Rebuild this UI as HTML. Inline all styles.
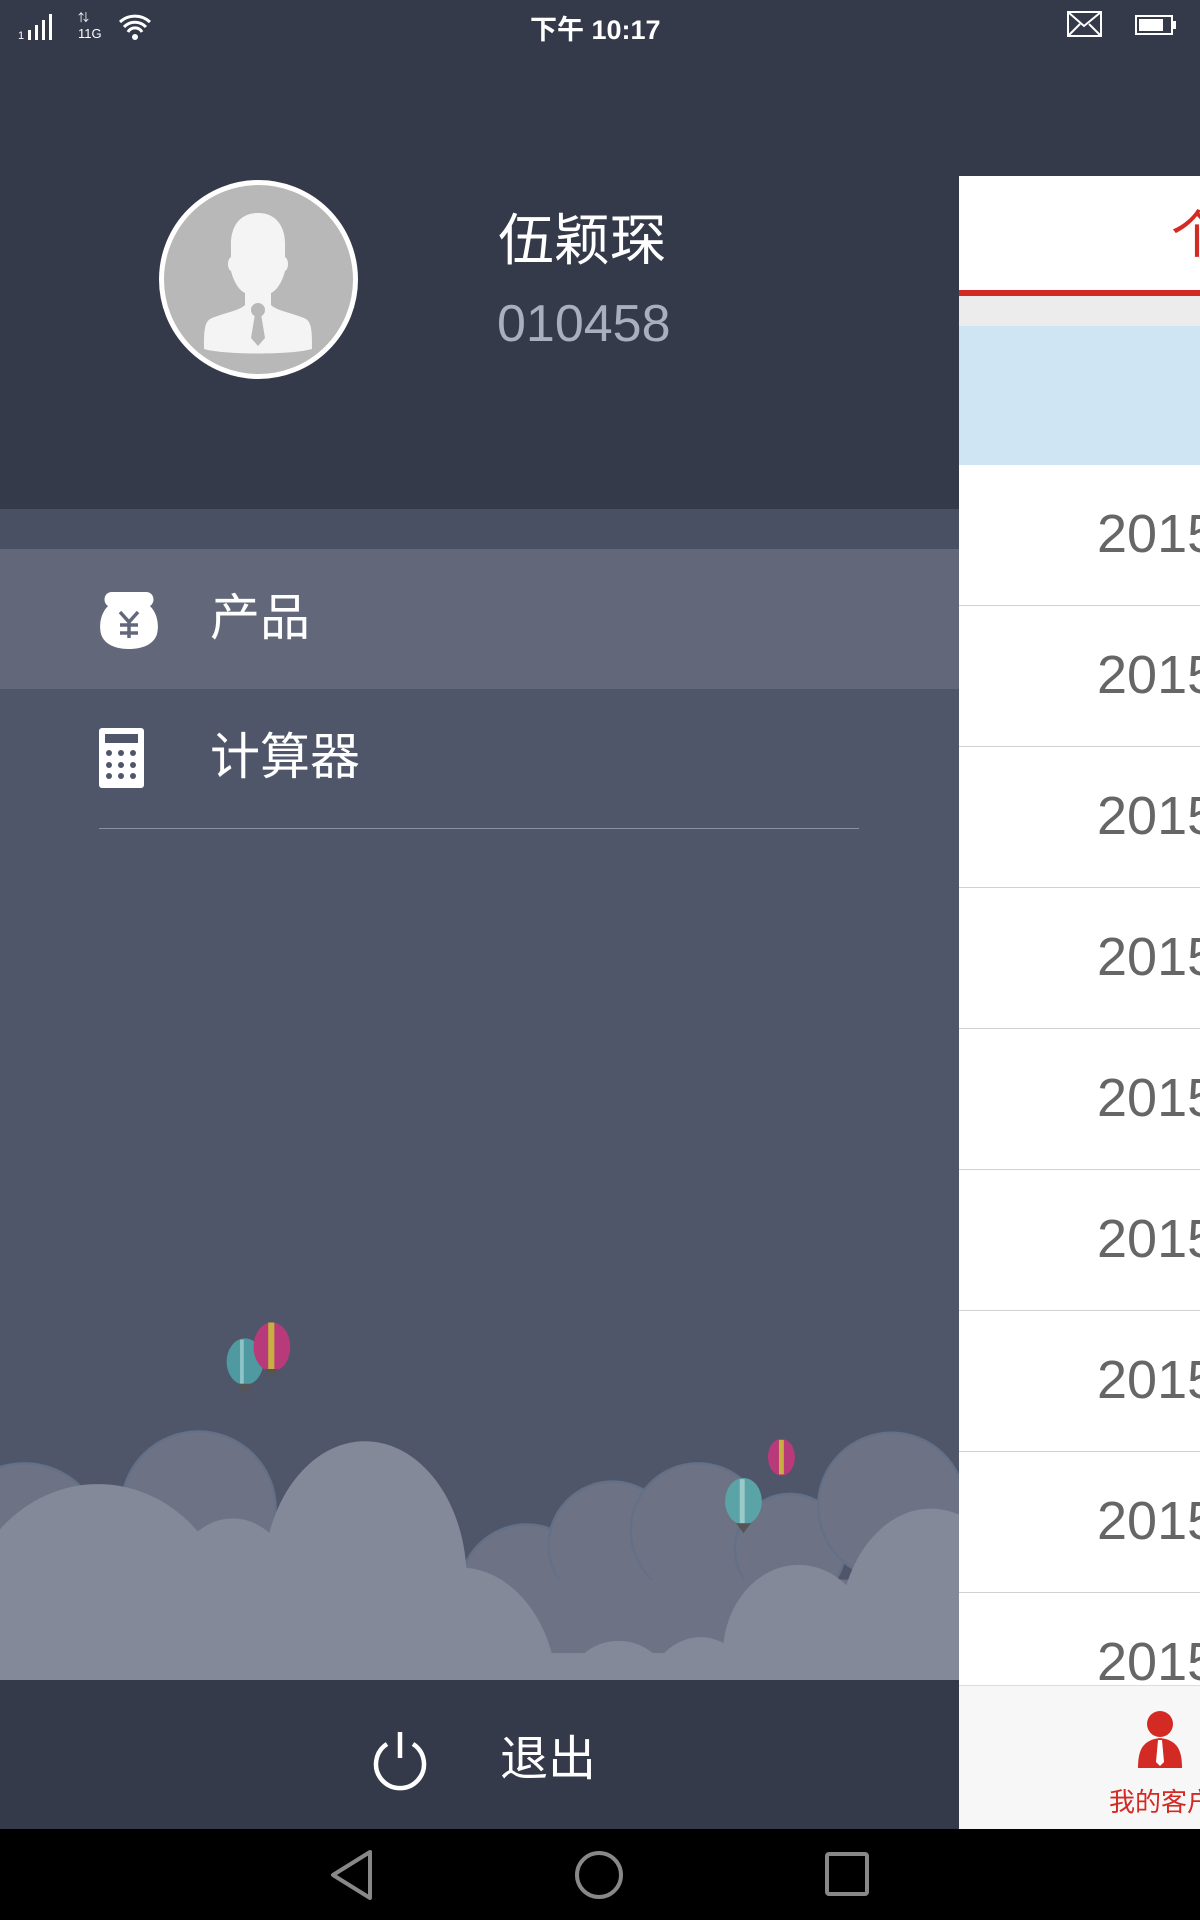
<!DOCTYPE html>
<html><head><meta charset="utf-8"><style>
*{margin:0;padding:0;box-sizing:border-box}
body{width:1200px;height:1920px;position:relative;overflow:hidden;background:#353a4a;font-family:"Liberation Sans","Noto Sans CJK SC",sans-serif}
.a{position:absolute}
.r{height:141px;border-bottom:1px solid #d0d0d0;color:#666;font-size:54px;padding:38px 0 0 138px;overflow:hidden;white-space:nowrap}
</style></head><body>
<!-- status bar -->
<svg class="a" style="left:16px;top:8px" width="140" height="36">
<text x="2" y="31" font-size="11" fill="#fff" font-family="Liberation Sans">1</text>
<rect x="12" y="22" width="3" height="10" fill="#fff"/><rect x="19" y="17" width="3" height="15" fill="#fff"/><rect x="26" y="12" width="3" height="20" fill="#fff"/><rect x="33" y="6" width="3" height="26" fill="#fff"/>
<text x="62" y="13" font-size="11" fill="#fff">⇅</text><text x="62" y="30" font-size="13" fill="#fff">11G</text>
<path d="M104 14a22 22 0 0 1 30 0M108 19a15 15 0 0 1 22 0M112 24a8 8 0 0 1 14 0" stroke="#fff" stroke-width="3" fill="none"/><circle cx="119" cy="29" r="3" fill="#fff"/>
</svg>
<div class="a" style="left:530px;top:8px;color:#fff;font-size:27px;font-weight:bold">下午&nbsp;10:17</div>
<svg class="a" style="left:1066px;top:10px" width="120" height="30">
<rect x="2" y="2" width="33" height="24" fill="none" stroke="#fff" stroke-width="2"/><path d="M2 2l16 14 17-14M2 26l12-12M35 26l-12-12" stroke="#fff" stroke-width="2" fill="none"/>
<rect x="70" y="6" width="36" height="18" fill="none" stroke="#fff" stroke-width="2"/><rect x="73" y="9" width="24" height="12" fill="#fff"/><rect x="106" y="11" width="4" height="8" fill="#fff"/>
</svg>
<!-- header avatar -->
<div class="a" style="left:159px;top:180px;width:199px;height:199px;border-radius:50%;background:#b8b8b8;border:5px solid #fff"></div>
<svg class="a" style="left:159px;top:180px" width="199" height="199">
<path d="M99 33c-20 0-28 16-27 34l0 10c-4 2-4 12 0 14 3 12 9 20 14 22l0 12c-6 6-22 8-35 14-6 4-6 14-6 30 20 6 88 6 108 0 0-16 0-26-6-30-13-6-29-8-35-14l0-12c5-2 11-10 14-22 4-2 4-12 0-14l0-10c1-18-7-34-27-34z" fill="#f4f4f4"/>
<path d="M95 128h8l-1 6 4 24-7 8-7-8 4-24z" fill="#b8b8b8"/><circle cx="99" cy="130" r="7" fill="#b8b8b8"/>
</svg>
<div class="a" style="left:498px;top:206px;color:#fff;font-size:56px;line-height:70px">伍颖琛</div>
<div class="a" style="left:497px;top:294px;color:#a9afbe;font-size:52px;line-height:60px">010458</div>
<!-- menu -->
<div class="a" style="left:0;top:509px;width:959px;height:1171px;background:#50566a"></div>
<div class="a" style="left:0;top:509px;width:959px;height:40px;background:#4a5064"></div>
<div class="a" style="left:0;top:549px;width:959px;height:140px;background:#626879"></div>
<svg class="a" style="left:98px;top:588px" width="62" height="62">
<path d="M14 4c-8 0-10 10-4 14C2 26 1 38 3 46c3 10 14 15 28 15s25-5 28-15c2-8 1-20-7-28 6-4 4-14-4-14z" fill="#fff"/>
<path d="M22 24l9 10 9-10M22 37h18M22 45h18M31 34v16" stroke="#626879" stroke-width="3.5" fill="none"/>
</svg>
<div class="a" style="left:210px;top:588px;color:#fff;font-size:50px;line-height:60px">产品</div>
<svg class="a" style="left:99px;top:728px" width="46" height="60">
<rect width="45" height="60" rx="3" fill="#fff"/><rect x="6" y="6" width="33" height="9" fill="#50566a"/>
<g fill="#50566a"><circle cx="10" cy="25" r="3"/><circle cx="22" cy="25" r="3"/><circle cx="34" cy="25" r="3"/><circle cx="10" cy="37" r="3"/><circle cx="22" cy="37" r="3"/><circle cx="34" cy="37" r="3"/><circle cx="10" cy="48" r="3"/><circle cx="22" cy="48" r="3"/><circle cx="34" cy="48" r="3"/></g>
</svg>
<div class="a" style="left:210px;top:727px;color:#fff;font-size:50px;line-height:60px">计算器</div>
<div class="a" style="left:99px;top:828px;width:760px;height:1px;background:#8a90a0"></div>
<!-- clouds -->
<svg class="a" style="left:0;top:1298px" width="959" height="382" viewBox="0 1060 783 312" preserveAspectRatio="none">
<g fill="#6d7385" stroke="#637087" stroke-width="2">
<circle cx="20" cy="1260" r="65"/><circle cx="162" cy="1232" r="63"/>
<circle cx="430" cy="1300" r="55"/><circle cx="500" cy="1262" r="52"/><circle cx="570" cy="1250" r="55"/><circle cx="645" cy="1265" r="45"/><circle cx="728" cy="1230" r="60"/>
<rect x="0" y="1290" width="783" height="82" stroke="none"/>
</g>
<g fill="#838998">
<ellipse cx="80" cy="1330" rx="110" ry="118"/><ellipse cx="190" cy="1300" rx="50" ry="60"/><ellipse cx="230" cy="1340" rx="40" ry="40"/><ellipse cx="298" cy="1290" rx="83" ry="113"/><ellipse cx="375" cy="1385" rx="80" ry="105"/>
<ellipse cx="505" cy="1380" rx="42" ry="40"/><ellipse cx="572" cy="1382" rx="42" ry="45"/><ellipse cx="652" cy="1352" rx="62" ry="74"/><ellipse cx="760" cy="1335" rx="75" ry="103"/>
<rect x="0" y="1350" width="783" height="22"/>
</g>
<g>
<ellipse cx="200" cy="1112" rx="15" ry="19" fill="#4e9aa0"/><rect x="196" y="1094" width="3" height="36" fill="#8ec4c8"/><path d="M194 1130h12l-6 10z" fill="#555"/>
<ellipse cx="222" cy="1100" rx="15" ry="20" fill="#b83a7a"/><rect x="219" y="1080" width="5" height="38" fill="#c7b040"/><path d="M216 1118h12l-6 8z" fill="#555"/>
<ellipse cx="607" cy="1226" rx="15" ry="19" fill="#5aa4a8"/><rect x="604" y="1208" width="4" height="36" fill="#9ccaca"/><path d="M601 1244h12l-6 8z" fill="#555"/>
<ellipse cx="638" cy="1190" rx="11" ry="15" fill="#b83a7a"/><rect x="636" y="1176" width="4" height="28" fill="#c7b040"/>
</g>
</svg>
<!-- logout -->
<div class="a" style="left:0;top:1680px;width:959px;height:149px;background:#353a4a"></div>
<svg class="a" style="left:370px;top:1730px" width="60" height="62"><path d="M17 14a24 24 0 1 0 26 0" stroke="#fff" stroke-width="4.5" fill="none"/><path d="M30 2v26" stroke="#fff" stroke-width="4.5"/></svg>
<div class="a" style="left:500px;top:1730px;color:#fff;font-size:48px;line-height:60px">退出</div>
<!-- right panel -->
<div class="a" style="left:959px;top:176px;width:241px;height:114px;background:#fff;overflow:hidden"><div style="position:absolute;left:212px;top:30px;color:#d42a24;font-size:52px;line-height:60px">个</div></div>
<div class="a" style="left:959px;top:290px;width:241px;height:6px;background:#d42a24"></div>
<div class="a" style="left:959px;top:296px;width:241px;height:30px;background:#ececec"></div>
<div class="a" style="left:959px;top:326px;width:241px;height:139px;background:#d0e5f4"></div>
<div class="a" style="left:959px;top:465px;width:241px;height:1220px;background:#fff;overflow:hidden">
<div class="r">2015</div><div class="r">2015</div><div class="r">2015</div><div class="r">2015</div><div class="r">2015</div><div class="r">2015</div><div class="r">2015</div><div class="r">2015</div><div class="r">2015</div>
</div>
<div class="a" style="left:959px;top:1685px;width:241px;height:144px;background:#f7f7f7;border-top:1px solid #ddd"></div>
<svg class="a" style="left:1136px;top:1710px" width="50" height="60"><circle cx="24" cy="14" r="13" fill="#d42a24"/><path d="M2 58c0-20 6-28 22-30 16 2 22 10 22 30z" fill="#d42a24"/><path d="M22 30h4l2 22-4 4-4-4z" fill="#fff"/></svg>
<div class="a" style="left:1109px;top:1782px;color:#d42a24;font-size:26px;white-space:nowrap">我的客户</div>
<!-- nav -->
<div class="a" style="left:0;top:1829px;width:1200px;height:91px;background:#000"></div>
<svg class="a" style="left:0;top:1829px" width="1200" height="91">
<path d="M370 23L333 46l37 23z" stroke="#888" stroke-width="4" fill="none" stroke-linejoin="round"/>
<circle cx="599" cy="46" r="22" stroke="#888" stroke-width="4" fill="none"/>
<rect x="827" y="25" width="40" height="40" rx="2" stroke="#888" stroke-width="4" fill="none"/>
</svg>
</body></html>
